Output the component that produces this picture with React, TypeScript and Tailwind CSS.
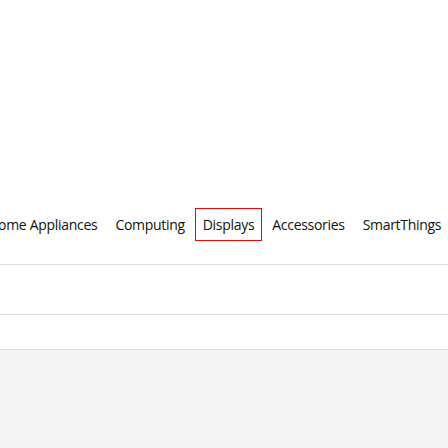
import React from "react";

const tabs = [
  { title: "Home Appliances", id: "1" },
  { title: "Computing", id: "2" },
  { title: "Displays", id: "3" },
  { title: "Accessories", id: "4" },
  { title: "SmartThings", id: "5" },
];

const App = () => {
  const active = "3";
  return (
    <div className="h-[448px] w-[448px] overflow-hidden bg-white" style={{ fontFamily: "'Open Sans', 'Noto Sans', sans-serif" }}>
      <div className="h-[208px]" />
      <div className="overflow-hidden">
        <div className="-ml-[20px] flex w-max gap-[2px]">
          {tabs.map((t) => (
            <div
              key={t.id}
              className={`flex h-[33px] items-center border px-[7px] text-[14px] font-medium tracking-[-0.3px] text-[#111111] ${
                t.id === active ? "border-[#ff0000]" : "border-transparent"
              }`}
            >
              {t.title}
            </div>
          ))}
        </div>
      </div>
      <div className="h-[23px]" />
      <div className="h-[50px] border-t border-[#dddddd]" />
      <div className="h-[35px] border-t border-[#dddddd]" />
      <div className="h-full border-t border-[#dddddd] bg-[#f4f4f4]" />
    </div>
  );
};

export default App;
